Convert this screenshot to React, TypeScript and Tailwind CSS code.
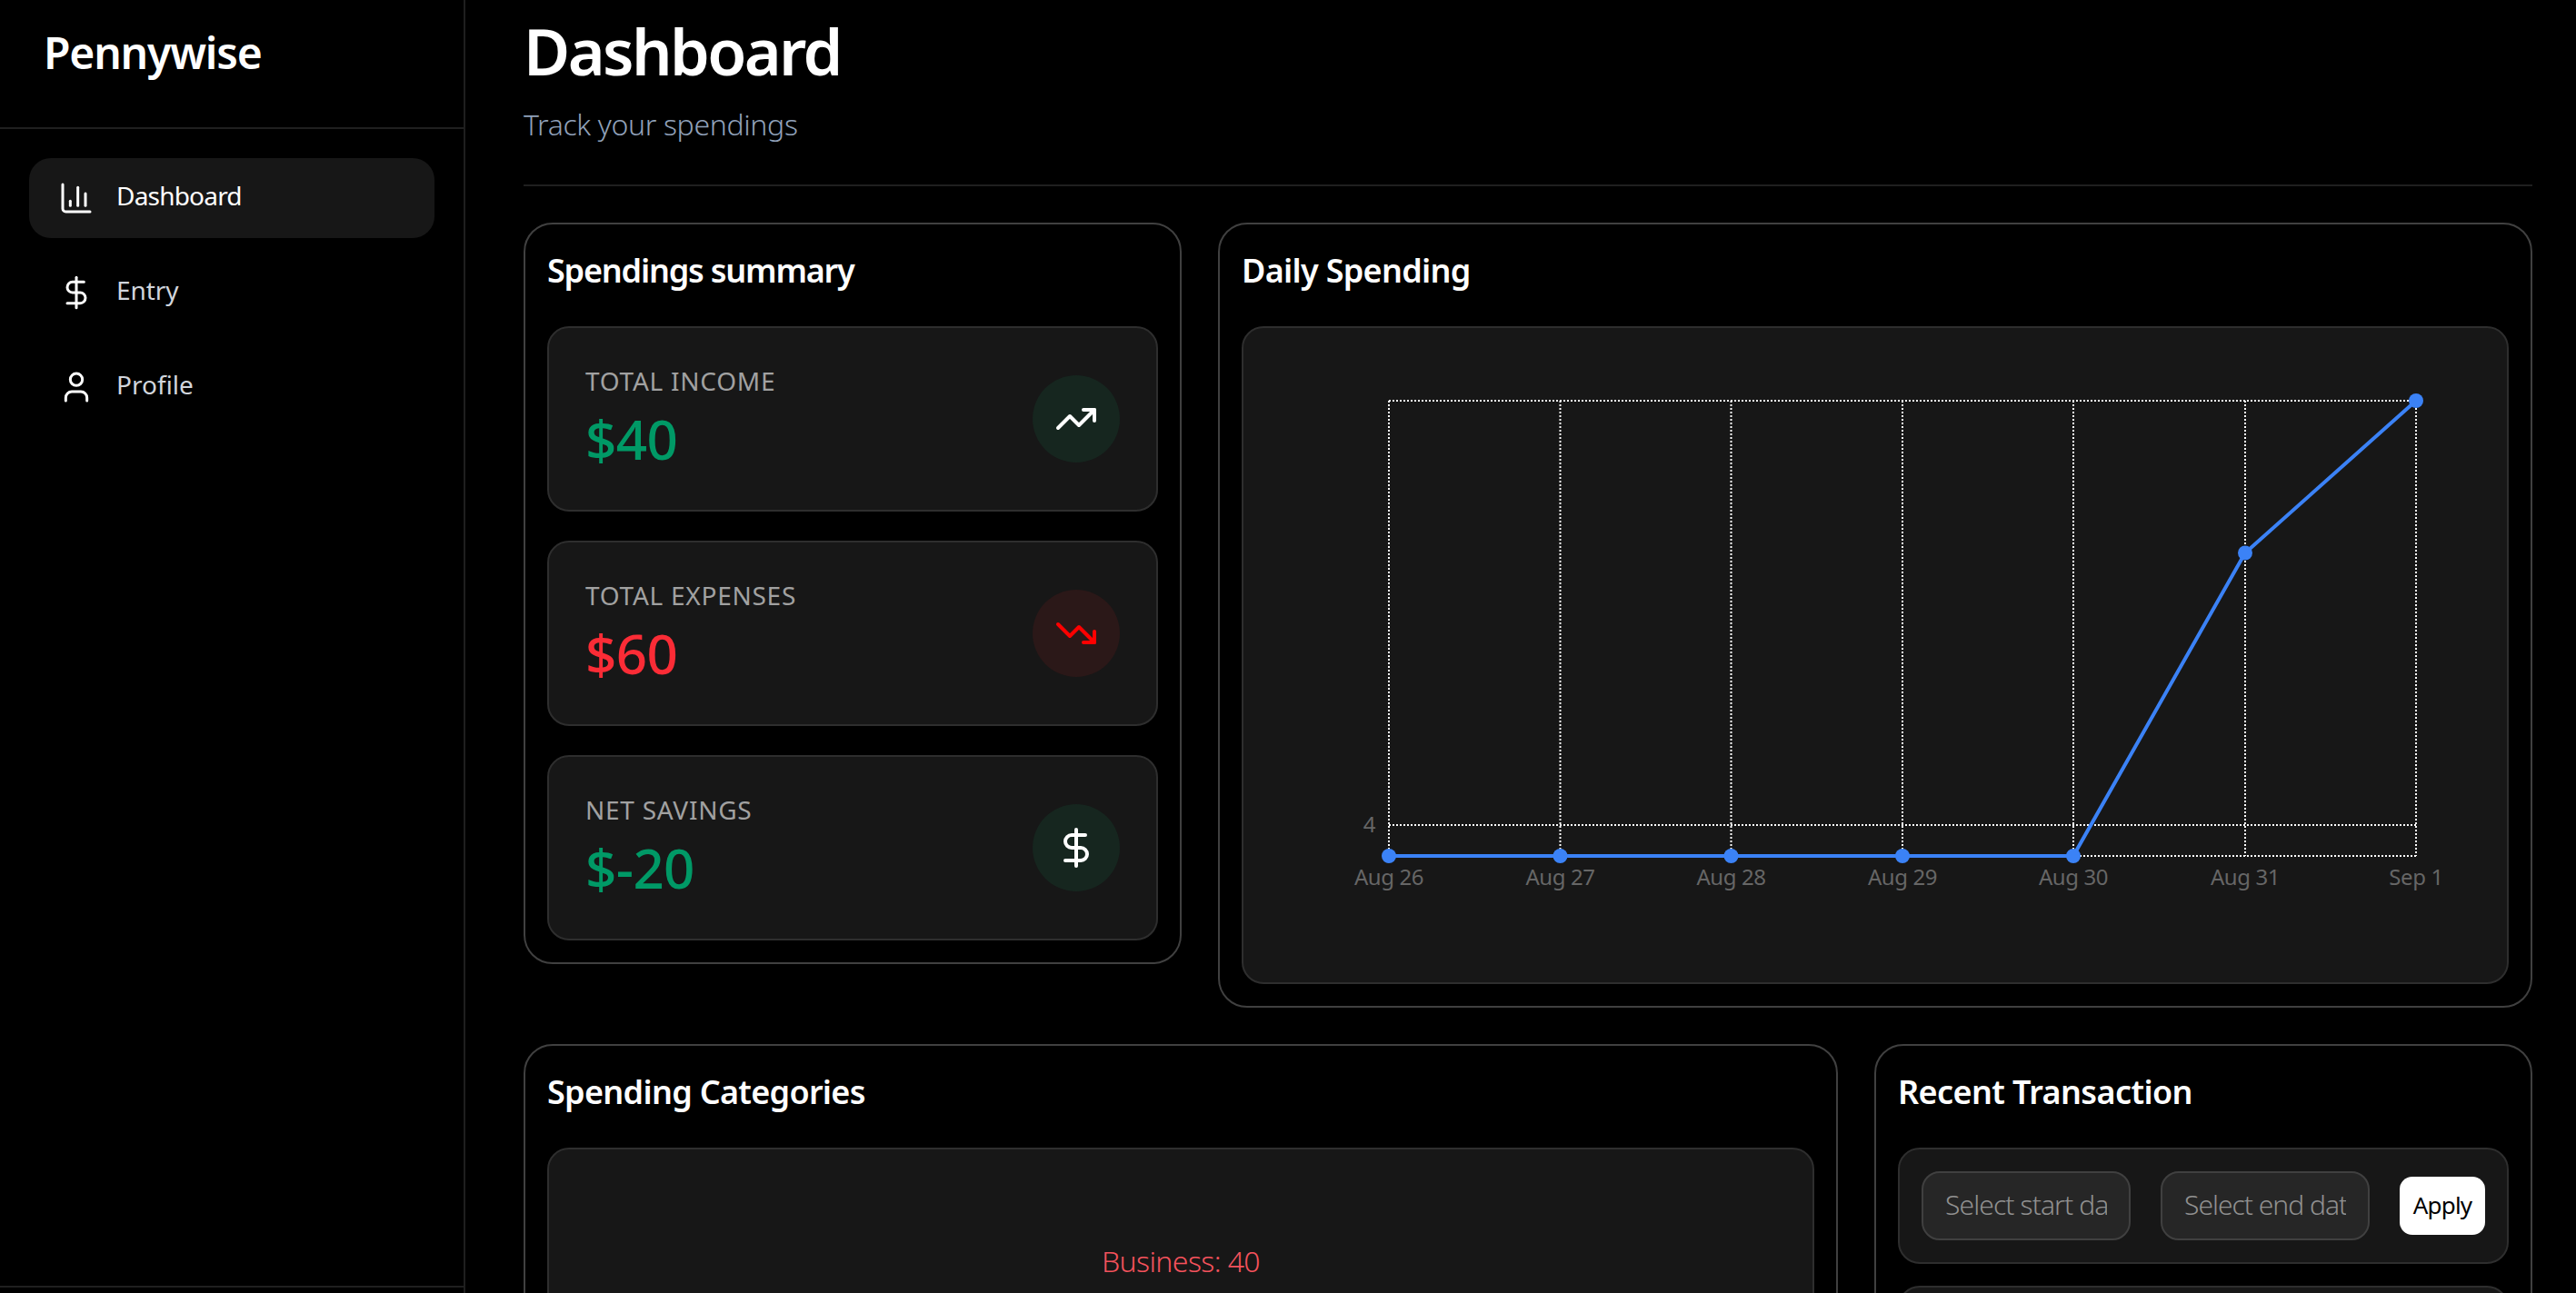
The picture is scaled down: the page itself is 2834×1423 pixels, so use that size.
import { ChartColumn, DollarSign, TrendingDown, TrendingUp, User } from "lucide-react";
import type { ReactNode } from "react";

const menu = [
  { id: 1, name: "Dashboard", icon: ChartColumn, active: true, tracking: "tracking-[-0.8px]" },
  { id: 2, name: "Entry", icon: DollarSign, active: false, tracking: "tracking-[-0.1px]" },
  { id: 3, name: "Profile", icon: User, active: false, tracking: "tracking-[0px]" },
];

const stats = [
  { id: 1, label: "TOTAL INCOME", value: "$40", valueClass: "text-[#009966]", circleClass: "bg-[#16261f] text-white", icon: TrendingUp },
  { id: 2, label: "TOTAL EXPENSES", value: "$60", valueClass: "text-[#fb2c36]", circleClass: "bg-[#2b1818] text-[#ff0000]", icon: TrendingDown },
  { id: 3, label: "NET SAVINGS", value: "$-20", valueClass: "text-[#009966]", circleClass: "bg-[#16261f] text-white", icon: DollarSign },
];

const days = [
  { label: "Aug 26", x: 160, y: 581 },
  { label: "Aug 27", x: 348.5, y: 581 },
  { label: "Aug 28", x: 536.5, y: 581 },
  { label: "Aug 29", x: 725, y: 581 },
  { label: "Aug 30", x: 913, y: 581 },
  { label: "Aug 31", x: 1102, y: 247.5 },
  { label: "Sep 1", x: 1290, y: 80 },
];

const Card = ({ title, tracking, children }: { title: string; tracking: string; children: ReactNode }) => (
  <section className="rounded-[32px] border-2 border-[#404040] bg-black p-6">
    <h2 className={`mb-8 h-14 text-[36px] leading-[54px] font-semibold text-white ${tracking}`}>{title}</h2>
    {children}
  </section>
);

const DailyChart = () => (
  <svg viewBox="0 0 1390 720" className="block h-[720px] w-[1390px]">
    <g stroke="#ffffff" strokeWidth="2" strokeDasharray="2 2" fill="none">
      <line x1="160" y1="80" x2="1290" y2="80" />
      <line x1="160" y1="547" x2="1290" y2="547" />
      <line x1="160" y1="581" x2="1290" y2="581" />
      {days.map((d) => (
        <line key={d.label} x1={d.x} y1="80" x2={d.x} y2="581" />
      ))}
    </g>
    <polyline points={days.map((d) => `${d.x},${d.y}`).join(" ")} fill="none" stroke="#3b82f6" strokeWidth="4" />
    {days.map((d) => (
      <circle key={d.label} cx={d.x} cy={d.y} r="8" fill="#3b82f6" />
    ))}
    <text x="145" y="555" textAnchor="end" fontSize="24" letterSpacing="-0.4" fill="#666666">4</text>
    {days.map((d) => (
      <text key={d.label} x={d.x} y="613" textAnchor="middle" fontSize="24" letterSpacing="-0.4" fill="#666666">{d.label}</text>
    ))}
  </svg>
);

export default function App() {
  return (
    <div className="flex h-screen overflow-hidden bg-black font-['Noto_Sans',sans-serif] text-white">
      {/* SIDEBAR */}
      <aside className="flex w-[512px] shrink-0 flex-col border-r-2 border-[#1f1f1f]">
        <div className="flex h-[142px] shrink-0 items-center border-b-2 border-[#1f1f1f] pb-6 pl-[48px]">
          <span className="text-[48px] font-semibold tracking-[-1.2px]">Pennywise</span>
        </div>
        <nav className="flex flex-1 flex-col gap-4 px-8 pt-8">
          {menu.map((item) => (
            <div
              key={item.id}
              className={`flex h-[88px] items-center gap-6 rounded-[24px] px-8 text-[28px] ${item.active ? "bg-[#171717] text-white" : "text-[#d1d5dc]"}`}
            >
              <item.icon size={40} strokeWidth={1.8} className="text-white" />
              <span className={`pb-[6px] ${item.tracking}`}>{item.name}</span>
            </div>
          ))}
        </nav>
        <div className="h-2 shrink-0 border-t-2 border-[#1f1f1f]" />
      </aside>

      {/* MAIN */}
      <main className="min-w-0 flex-1 pr-12 pl-16">
        <header className="h-[205px] border-b-2 border-[#1f1f1f] pt-2">
          <h1 className="text-[70px] leading-[96px] font-semibold tracking-[-2.6px]">Dashboard</h1>
          <p className="mt-[9px] text-[32px] leading-[48px] font-light tracking-[-0.35px] text-[#90a1b9]">Track your spendings</p>
        </header>

        <div className="mt-10 grid grid-cols-[724px_1fr] items-start gap-10">
          <Card title="Spendings summary" tracking="tracking-[-1.2px]">
            <div className="flex flex-col gap-8">
              {stats.map((stat) => (
                <div key={stat.id} className="flex h-[204px] items-center justify-between rounded-[24px] border-2 border-[#2e2e2e] bg-[#171717] px-10">
                  <div className="pb-1">
                    <p className="text-[28px] leading-[40px] tracking-[0.75px] text-[#a1a1a1]">{stat.label}</p>
                    <p className={`mt-2 text-[60px] leading-[72px] font-medium tracking-[-0.6px] ${stat.valueClass}`}>{stat.value}</p>
                  </div>
                  <div className={`flex h-24 w-24 items-center justify-center rounded-full ${stat.circleClass}`}>
                    <stat.icon size={48} strokeWidth={2} />
                  </div>
                </div>
              ))}
            </div>
          </Card>

          <Card title="Daily Spending" tracking="tracking-[-0.7px]">
            <div className="rounded-[24px] border-2 border-[#2e2e2e] bg-[#171717]">
              <DailyChart />
            </div>
          </Card>
        </div>

        <div className="mt-10 grid grid-cols-[1fr_724px] items-start gap-10">
          <Card title="Spending Categories" tracking="tracking-[-0.7px]">
            <div className="h-[800px] rounded-[24px] border-2 border-[#2e2e2e] bg-[#171717] pt-[99px] text-center">
              <span className="text-[32px] font-light tracking-[-0.6px] text-[#f4525c]">Business: 40</span>
            </div>
          </Card>

          <Card title="Recent Transaction" tracking="tracking-[-0.6px]">
            <div className="flex flex-col gap-6">
              <div className="flex h-[128px] items-center gap-[32px] rounded-[24px] border-2 border-[#2e2e2e] bg-[#171717] px-6">
                <input
                  placeholder="Select start date"
                  className="h-[76px] w-[230px] rounded-[20px] border-2 border-[#404040] bg-[#262626] px-6 pb-[3px] text-[30px] font-light tracking-[-0.9px] placeholder:text-[#909090]"
                />
                <input
                  placeholder="Select end date"
                  className="ml-[1px] h-[76px] w-[230px] rounded-[20px] border-2 border-[#404040] bg-[#262626] px-6 pb-[3px] text-[30px] font-light tracking-[-1px] placeholder:text-[#909090]"
                />
                <button className="ml-[1px] h-16 w-[94px] rounded-[14px] bg-white pb-[2px] text-[26px] tracking-[-0.8px] text-black">Apply</button>
              </div>
              <div className="h-[600px] rounded-[24px] border-2 border-[#2e2e2e] bg-[#171717]" />
            </div>
          </Card>
        </div>
      </main>
    </div>
  );
}
